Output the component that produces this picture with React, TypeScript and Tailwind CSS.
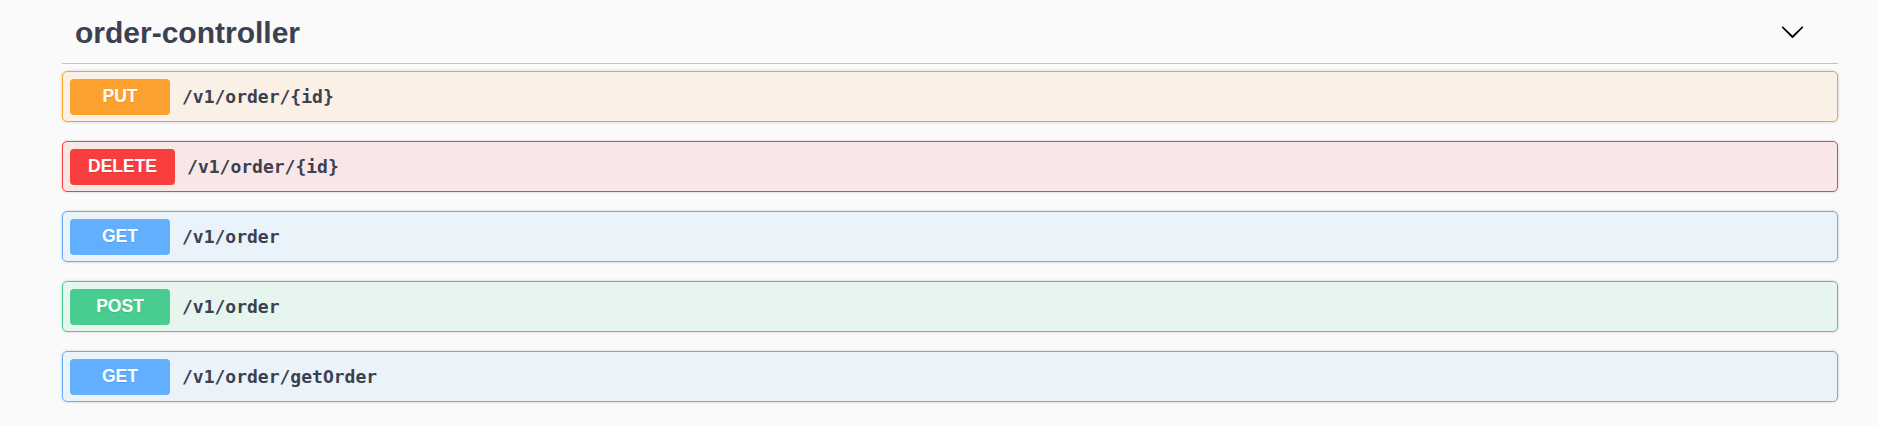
import React from "react";

type Op = { method: string; path: string; badge: string; block: string };

const ops: Op[] = [
  { method: "PUT", path: "/v1/order/{id}", badge: "bg-[#fca130]", block: "border-[#fca130] bg-[#fca130]/10" },
  { method: "DELETE", path: "/v1/order/{id}", badge: "bg-[#f93e3e]", block: "border-[#f93e3e] bg-[#f93e3e]/10" },
  { method: "GET", path: "/v1/order", badge: "bg-[#61affe]", block: "border-[#61affe] bg-[#61affe]/10" },
  { method: "POST", path: "/v1/order", badge: "bg-[#49cc90]", block: "border-[#49cc90] bg-[#49cc90]/10" },
  { method: "GET", path: "/v1/order/getOrder", badge: "bg-[#61affe]", block: "border-[#61affe] bg-[#61affe]/10" },
];

export default function App() {
  return (
    <div className="w-[1878px] h-[426px] bg-[#fafafa] overflow-hidden">
      <div className="ml-[62px] w-[1776px] pt-[3px]">
        <div className="flex items-center justify-between h-[61px] border-b border-[#3b4151]/30">
          <h3
            className="pl-[13px] text-[30px] leading-[34px] font-bold text-[#3b4151]"
            style={{ fontFamily: '"Liberation Sans", Arial, sans-serif' }}
          >
            order-controller
          </h3>
          <svg width="25" height="25" viewBox="0 0 20 20" className="mr-[33px] mt-[-3px]">
            <path
              fill="#000"
              d="M17.418 6.109c.272-.268.709-.268.979 0s.271.701 0 .969l-7.908 7.83c-.27.268-.707.268-.979 0l-7.908-7.83c-.27-.268-.27-.701 0-.969.271-.268.709-.268.979 0L10 13.25l7.418-7.141z"
            />
          </svg>
        </div>
        <div className="mt-[7px] flex flex-col gap-[19px]">
          {ops.map((op, i) => (
            <div
              key={i}
              className={`flex items-center h-[51px] px-[7px] border rounded-[5px] shadow-[0_0_3px_rgba(0,0,0,0.19)] ${op.block}`}
            >
              <span
                className={`min-w-[100px] h-[36px] px-[18px] flex items-center justify-center rounded-[4px] text-white font-bold text-[17.5px] ${op.badge}`}
                style={{ fontFamily: '"Liberation Sans", Arial, sans-serif', textShadow: "0 1px 0 rgba(0,0,0,0.1)" }}
              >
                {op.method}
              </span>
              <span
                className="pl-[12px] text-[18px] font-semibold text-[#3b4151]"
                style={{ fontFamily: '"DejaVu Sans Mono", monospace' }}
              >
                {op.path}
              </span>
            </div>
          ))}
        </div>
      </div>
    </div>
  );
}
